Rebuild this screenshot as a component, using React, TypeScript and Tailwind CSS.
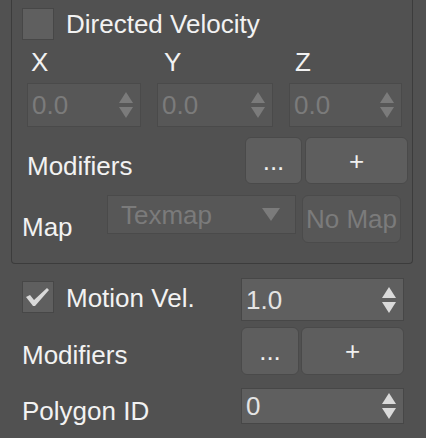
import React from 'react';

const Arrows = ({ disabled }: { disabled?: boolean }) => (
  <svg width="14" height="26" viewBox="0 0 14 26" className="shrink-0">
    <polygon points="0,11 7,0 14,11" fill={disabled ? '#7b7b7b' : '#dadada'} />
    <polygon points="0,15 14,15 7,26" fill={disabled ? '#7b7b7b' : '#dadada'} />
  </svg>
);

const Spinner = ({ value, disabled, className }: { value: string; disabled?: boolean; className: string }) => (
  <div
    className={`flex items-center justify-between border pl-[4px] pr-[7px] ${
      disabled ? 'bg-[#575757] border-[#4a4a4a] text-[#7b7b7b]' : 'bg-[#5f5f5f] border-[#474747] text-[#e4e4e4]'
    } ${className}`}
  >
    <span className="leading-[30px]">{value}</span>
    <Arrows disabled={disabled} />
  </div>
);

const Button = ({ label, className }: { label: string; className: string }) => (
  <div
    className={`flex items-center justify-center rounded-[6px] border border-[#4a4a4a] bg-[#5e5e5e] text-[#f0f0f0] leading-[30px] ${className}`}
  >
    {label}
  </div>
);

const Checkbox = ({ checked }: { checked?: boolean }) => (
  <div className="flex h-[32px] w-[32px] shrink-0 items-center justify-center border border-[#474747] bg-[#5f5f5f]">
    {checked && (
      <svg width="24" height="20" viewBox="0 0 24 20">
        <path d="M0 10 L4 8 L8 13 L21 1 L23 3 L9 19 L7 19 Z" fill="#d9d9d9" />
      </svg>
    )}
  </div>
);

export default function App() {
  return (
    <div
      className="h-[438px] w-[426px] overflow-hidden bg-[#515151] text-[26px] text-[#f2f2f2]"
      style={{ fontFamily: '"Liberation Sans", Arial, sans-serif' }}
    >
      {/* group box, top edge scrolled out of view */}
      <div className="ml-[11px] h-[264px] w-[402px] rounded-b-[4px] border-x border-b border-[#3c3c3c] pt-[8px]">
        <div className="flex items-center pl-[10px]">
          <Checkbox />
          <span className="ml-[12px] leading-[30px]">Directed Velocity</span>
        </div>

        <div className="mt-[7px] grid grid-cols-[114px_116px_113px] gap-x-[16px] pl-[15px] leading-[30px]">
          <span className="pl-[4px]">X</span>
          <span className="pl-[7px]">Y</span>
          <span className="pl-[6px]">Z</span>
        </div>

        <div className="mt-[6px] grid grid-cols-[114px_116px_113px] gap-x-[16px] pl-[15px]">
          <Spinner value="0.0" disabled className="h-[44px]" />
          <Spinner value="0.0" disabled className="h-[44px]" />
          <Spinner value="0.0" disabled className="h-[44px]" />
        </div>

        <div className="mt-[10px] flex items-start pl-[15px] pr-[4px]">
          <span className="mt-[14px] leading-[30px]">Modifiers</span>
          <div className="ml-auto flex gap-[3px]">
            <Button label="..." className="h-[47px] w-[57px]" />
            <Button label="+" className="h-[47px] w-[103px]" />
          </div>
        </div>

        <div className="mt-[11px] flex items-start pl-[10px] pr-[11px]">
          <span className="mt-[17px] leading-[30px]">Map</span>
          <div className="ml-auto flex items-start gap-[6px]">
            <div className="flex h-[39px] w-[189px] items-center justify-between border border-[#4a4a4a] bg-[#575757] pl-[13px] pr-[15px] text-[#7b7b7b]">
              <span className="leading-[30px]">Texmap</span>
              <svg width="18" height="13" viewBox="0 0 18 13">
                <polygon points="0,0 18,0 9,13" fill="#7b7b7b" />
              </svg>
            </div>
            <div className="flex h-[48px] w-[99px] items-center justify-center rounded-[6px] border border-[#4b4b4b] bg-[#575757] leading-[30px] text-[#7b7b7b]">
              No Map
            </div>
          </div>
        </div>
      </div>

      <div className="mt-[14px] flex items-start pl-[22px] pr-[22px]">
        <div className="mt-[3px]">
          <Checkbox checked />
        </div>
        <span className="ml-[12px] mt-[5px] leading-[30px]">Motion Vel.</span>
        <Spinner value="1.0" className="ml-auto h-[43px] w-[163px]" />
      </div>

      <div className="mt-[6px] flex items-start pl-[22px] pr-[22px]">
        <span className="mt-[13px] leading-[30px]">Modifiers</span>
        <div className="ml-auto flex gap-[2px]">
          <Button label="..." className="h-[48px] w-[58px]" />
          <Button label="+" className="h-[48px] w-[103px]" />
        </div>
      </div>

      <div className="mt-[13px] flex items-start pl-[22px] pr-[22px]">
        <span className="mt-[8px] leading-[30px]">Polygon ID</span>
        <Spinner value="0" className="ml-auto h-[36px] w-[163px]" />
      </div>
    </div>
  );
}
